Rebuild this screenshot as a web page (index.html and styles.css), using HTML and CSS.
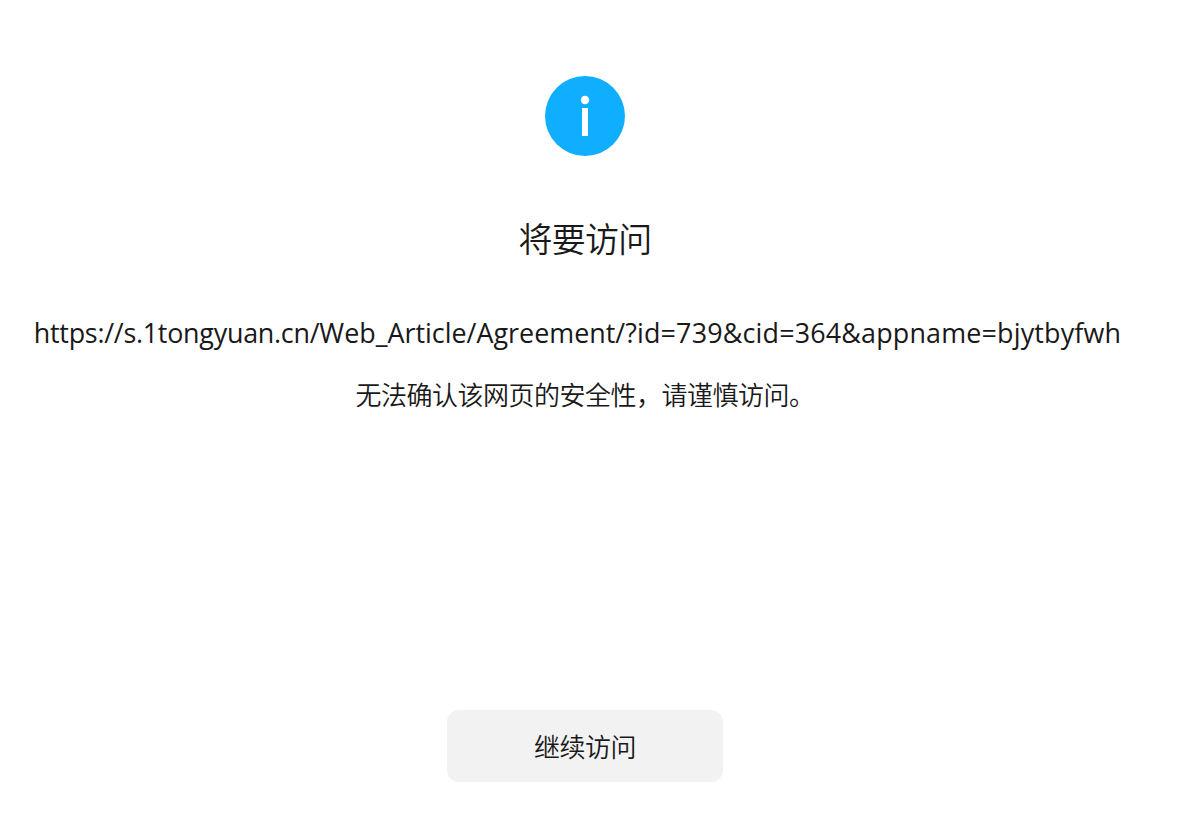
FILE: index.html
```html
<!DOCTYPE html>
<html lang="zh-CN">
<head>
    <meta charset="UTF-8">
    <meta name="viewport" content="width=device-width, initial-scale=1.0">
    <title>将要访问</title>
    <link rel="stylesheet" href="styles.css">
</head>
<body>

    <div class="page">
        <svg class="icon" viewBox="0 0 80 80" aria-hidden="true">
            <circle cx="40" cy="40" r="40" fill="#10aeff"/>
            <circle cx="40" cy="24" r="4.2" fill="#fff"/>
            <rect x="37" y="32" width="6" height="28" fill="#fff"/>
        </svg>

        <h1 class="title">将要访问</h1>
        <p class="url"><span class="url-host">https://s.1tongyuan.cn/</span>Web_Article/Agreement/<span class="url-query">?id=739&amp;cid=364&amp;appname=bjytbyfwh</span></p>
        <p class="desc">无法确认该网页的安全性，请谨慎访问。</p>

        <button class="button" type="button">继续访问</button>
    </div>

</body>
</html>
```

FILE: styles.css
```css
* {
    box-sizing: border-box;
}

body {
    margin: 0;
    background-color: #fff;
    color: #191919;
    font-family: "Noto Sans CJK SC", sans-serif;
    overflow: hidden;
}

.page {
    display: flex;
    flex-direction: column;
    align-items: center;
    width: 1170px;
    height: 840px;
    padding: 76px 0 58px;
}

.icon {
    width: 80px;
    height: 80px;
}

.title {
    margin: 58px 0 0;
    font-size: 34px;
    font-weight: 350;
    line-height: 48px;
    letter-spacing: -0.8px;
}

.url {
    margin: 52px 0 0;
    padding-right: 15px;
    font-family: "Open Sans", sans-serif;
    font-size: 26.9px;
    line-height: 38px;
    white-space: nowrap;
}

.url-host {
    letter-spacing: -0.26px;
}

.url-query {
    letter-spacing: 0.17px;
}

.desc {
    margin: 23px 0 0;
    font-size: 26px;
    font-weight: 350;
    line-height: 38px;
    letter-spacing: -0.5px;
}

.button {
    width: 276px;
    height: 72px;
    margin-top: auto;
    padding: 0 0 1px;
    border: none;
    border-radius: 12px;
    background-color: #f2f2f2;
    color: #191919;
    font-family: inherit;
    font-size: 26px;
    font-weight: 350;
    letter-spacing: -0.5px;
    cursor: pointer;
}
```
